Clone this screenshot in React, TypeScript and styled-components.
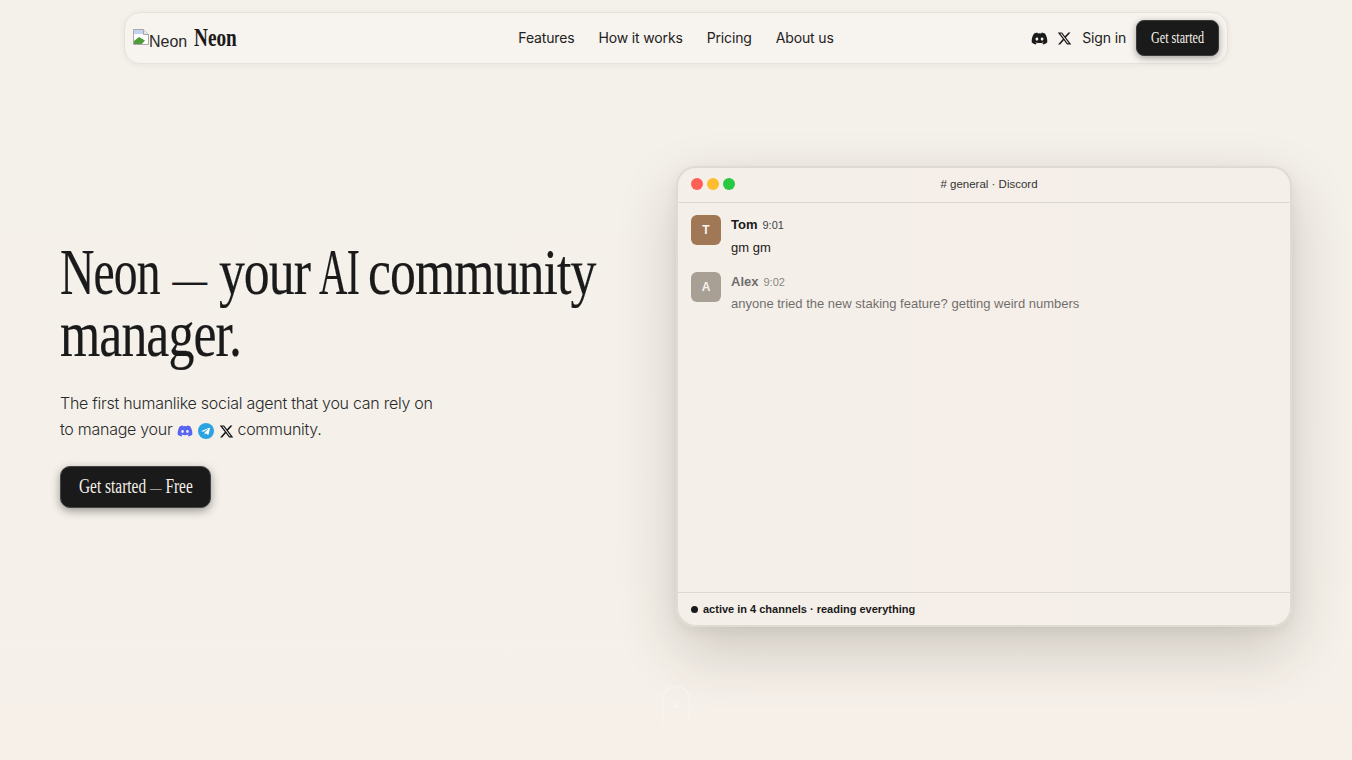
import React from "react";
import styled, { createGlobalStyle } from "styled-components";
import { FaDiscord, FaXTwitter } from "react-icons/fa6";

const Global = createGlobalStyle`
  html, body { margin: 0; padding: 0; }
  body {
    background: #f5f1ea;
    color: #1a1a1a;
    font-family: "Inter", "Liberation Sans", sans-serif;
    overflow: hidden;
  }
`;

const Page = styled.div`
  position: relative;
  height: 760px;
  background: linear-gradient(180deg, #f4f0ea 0%, #f5f1ea 70%, #f6f0e9 100%);
  display: flex;
  flex-direction: column;
`;

const NavWrap = styled.header`
  padding-top: 12px;
  display: flex;
  justify-content: center;
`;

const Nav = styled.nav`
  box-sizing: border-box;
  width: 1104px;
  height: 52px;
  padding: 0 8px;
  display: grid;
  grid-template-columns: 1fr auto 1fr;
  align-items: center;
  background: #f7f3ee;
  border: 1px solid #e6e1da;
  border-radius: 16px;
  box-shadow: 0 1px 6px rgba(60, 50, 40, 0.06);
`;

const Logo = styled.a`
  display: flex;
  align-items: center;
  gap: 7px;
`;

const BrokenImage = styled.span`
  display: inline-flex;
  align-items: flex-start;
  font-family: "Liberation Sans", sans-serif;
  font-size: 16px;
  line-height: 18px;
  color: #2a2a2a;
  & > svg { display: block; flex: none; margin-top: 3px; }
  & > span { padding-top: 7px; }
`;

const Squeezed = styled.span<{ $sx: number }>`
  display: inline-block;
  font-family: "Liberation Serif", serif;
  white-space: nowrap;
  transform: scaleX(${(p) => p.$sx});
  transform-origin: left center;
`;

const Dash = styled.span<{ $size: number; $gap?: number }>`
  font-size: ${(p) => p.$size}px;
  line-height: 0;
  margin: 0 ${(p) => p.$gap ?? 0}px;
`;

const FittedWord = styled.span<{ $w: number; $sx: number }>`
  display: inline-block;
  width: ${(p) => p.$w}px;
  transform: scaleX(${(p) => p.$sx});
  transform-origin: left center;
`;

const LogoMark = styled.span`
  display: block;
  width: 44px;
  margin-top: -2px;
  font-size: 26px;
  font-weight: 700;
  line-height: 24px;
  color: #1a1a1a;
`;

const Links = styled.div`
  display: flex;
  gap: 24px;
`;

const LinkItem = styled.a`
  font-size: 14px;
  line-height: 20px;
  letter-spacing: -0.15px;
  color: #222;
`;

const NavRight = styled.div`
  display: flex;
  justify-content: flex-end;
  align-items: center;
`;

const NavIcon = styled.span<{ $gap: number }>`
  display: inline-flex;
  margin-right: ${(p) => p.$gap}px;
  color: #1a1a1a;
`;

const SmallCta = styled.button`
  box-sizing: border-box;
  width: 83px;
  height: 36px;
  margin-left: 10px;
  padding: 0;
  display: flex;
  align-items: center;
  justify-content: center;
  background: #1a1a1a;
  color: #f7f3ec;
  border: 1px solid #3a3a3a;
  border-radius: 8px;
  box-shadow: 0 2px 7px rgba(0, 0, 0, 0.35);
`;

const SmallCtaLabel = styled.span`
  display: block;
  width: 53px;
  font-size: 16px;
  line-height: 18px;
`;

const Hero = styled.main`
  flex: 1;
  display: grid;
  grid-template-columns: 616px 616px;
  justify-content: space-between;
  padding: 102px 60px 0;
  align-items: start;
`;

const Copy = styled.section`
  padding-top: 75px;
`;

const Heading = styled.h1`
  margin: 0;
  font-weight: 400;
  font-size: 66px;
  line-height: 62px;
  color: #1a1a1a;
  height: 124px;
`;

const HeadingText = styled(Squeezed)`
  letter-spacing: -1.2px;
  word-spacing: -4px;
  -webkit-text-stroke: 0.2px #1a1a1a;
`;

const Sub = styled.p`
  margin: 25px 0 0;
  font-size: 16px;
  font-weight: 300;
  line-height: 26px;
  letter-spacing: -0.27px;
  color: #2a2a2a;
`;

const InlineIcons = styled.span`
  display: inline-flex;
  align-items: center;
  gap: 5px;
  margin: 0 3px 0 5px;
  vertical-align: -4px;
`;

const BigCta = styled.button`
  box-sizing: border-box;
  display: flex;
  align-items: center;
  justify-content: center;
  width: 151px;
  height: 42px;
  margin-top: 24px;
  padding: 0 0 2px;
  background: #1a1a1a;
  color: #f5f0e9;
  border: 1px solid #444;
  border-radius: 10px;
  box-shadow: 0 3px 10px rgba(0, 0, 0, 0.38);
`;

const BigCtaLabel = styled.span`
  display: block;
  width: 113px;
  font-size: 20px;
  line-height: 24px;
`;

const Window = styled.section`
  box-sizing: border-box;
  height: 461px;
  display: flex;
  flex-direction: column;
  background: linear-gradient(90deg, #f4efe9 0%, #f6efe9 50%, #f4efe9 100%);
  border: 2px solid #dfdad3;
  border-radius: 20px;
  box-shadow: 0 24px 60px rgba(50, 40, 30, 0.2), 0 4px 14px rgba(50, 40, 30, 0.06);
  font-family: "Liberation Sans", sans-serif;
  overflow: hidden;
`;

const TitleBar = styled.div`
  box-sizing: border-box;
  height: 35px;
  flex: none;
  display: flex;
  align-items: center;
  gap: 4px;
  padding: 0 13px 2px;
  border-bottom: 1px solid #ddd8d1;
`;

const Dot = styled.span<{ $c: string }>`
  width: 12px;
  height: 12px;
  border-radius: 50%;
  background: ${(p) => p.$c};
`;

const WinTitle = styled.span`
  flex: 1;
  margin-right: 38px;
  text-align: center;
  font-size: 11.5px;
  color: #333;
`;

const Messages = styled.div`
  flex: 1;
  padding: 12px 13px;
  display: flex;
  flex-direction: column;
  gap: 14px;
`;

const Message = styled.article<{ $faded?: boolean }>`
  display: flex;
  gap: 10px;
  opacity: ${(p) => (p.$faded ? 0.62 : 1)};
`;

const Avatar = styled.span<{ $bg: string }>`
  flex: none;
  width: 30px;
  height: 30px;
  border-radius: 6px;
  display: flex;
  align-items: center;
  justify-content: center;
  background: ${(p) => p.$bg};
  color: #f8f4ee;
  font-size: 12px;
  font-weight: 700;
`;

const Meta = styled.div`
  display: flex;
  align-items: baseline;
  gap: 5px;
  height: 20px;
  line-height: 20px;
`;

const Name = styled.span`
  font-size: 13px;
  font-weight: 700;
  color: #1a1a1a;
`;

const Time = styled.span`
  font-size: 11px;
  color: #444;
`;

const Body = styled.div<{ $nudge?: number }>`
  margin-top: ${(p) => 3 - (p.$nudge ?? 0)}px;
  font-size: 13px;
  line-height: 20px;
  color: #1a1a1a;
`;

const StatusBar = styled.div`
  box-sizing: border-box;
  height: 33px;
  flex: none;
  display: flex;
  align-items: center;
  gap: 5px;
  padding: 0 13px;
  border-top: 1px solid #ddd8d1;
  font-size: 11px;
  font-weight: 700;
  color: #1a1a1a;
`;

const StatusDot = styled.span`
  width: 7px;
  height: 7px;
  border-radius: 50%;
  background: #1a1a1a;
`;

const ScrollHint = styled.div`
  position: absolute;
  left: 662px;
  top: 686px;
  width: 28px;
  height: 38px;
  box-sizing: border-box;
  border: 1px solid rgba(255, 255, 255, 0.35);
  border-bottom-color: transparent;
  border-radius: 14px 14px 0 0;
  display: flex;
  justify-content: center;
  padding-top: 18px;
`;

const ScrollPip = styled.span`
  width: 3px;
  height: 3px;
  border-radius: 50%;
  background: rgba(255, 255, 255, 0.5);
`;

const BrokenIcon = () => (
  <svg width="16" height="16" viewBox="0 0 16 16">
    <path d="M0.5 0.5H10.5L15.5 5.5V15.5H0.5Z" fill="#fff" stroke="#a9a9a9" />
    <path d="M10.5 0.5V5.5H15.5" fill="#e8e8e8" stroke="#a9a9a9" />
    <path d="M1 1H10V5H1Z" fill="#c3d4f2" />
    <path d="M1 15V12L6 8L12 11.5L9 15Z" fill="#4f9a3a" />
    <path d="M9 15L15 9V15Z" fill="#ffffff" />
  </svg>
);

const TelegramIcon = () => (
  <svg width="16" height="16" viewBox="0 0 16 16">
    <circle cx="8" cy="8" r="8" fill="#2aa3e2" />
    <path
      d="M3.4 7.9L11.3 4.8C11.7 4.7 12 4.9 11.9 5.4L10.6 11.4C10.5 11.9 10.2 12 9.8 11.7L7.9 10.3L7 11.2C6.9 11.3 6.7 11.4 6.5 11.4L6.7 9.4L10.2 6.2C10.4 6 10.2 5.9 9.9 6.1L5.6 8.8L3.7 8.2C3.2 8.1 3.2 8 3.4 7.9Z"
      fill="#fff"
    />
  </svg>
);

export default function App() {
  return (
    <Page>
      <Global />
      <NavWrap>
        <Nav>
          <Logo>
            <BrokenImage>
              <BrokenIcon />
              <span>Neon</span>
            </BrokenImage>
            <LogoMark>
              <Squeezed $sx={0.74}>Neon</Squeezed>
            </LogoMark>
          </Logo>
          <Links>
            <LinkItem>Features</LinkItem>
            <LinkItem>How it works</LinkItem>
            <LinkItem>Pricing</LinkItem>
            <LinkItem>About us</LinkItem>
          </Links>
          <NavRight>
            <NavIcon $gap={9}>
              <FaDiscord size={17} />
            </NavIcon>
            <NavIcon $gap={10}>
              <FaXTwitter size={15} />
            </NavIcon>
            <LinkItem>Sign in</LinkItem>
            <SmallCta>
              <SmallCtaLabel>
                <Squeezed $sx={0.76}>Get started</Squeezed>
              </SmallCtaLabel>
            </SmallCta>
          </NavRight>
        </Nav>
      </NavWrap>
      <Hero>
        <Copy>
          <Heading>
            <HeadingText $sx={0.785}>
              <FittedWord $w={127} $sx={0.92}>Neon</FittedWord> <Dash $size={44} $gap={5}>—</Dash> your{" "}
              <FittedWord $w={51} $sx={0.76}>AI</FittedWord> community
              <br />
              manager.
            </HeadingText>
          </Heading>
          <Sub>
            The first humanlike social agent that you can rely on
            <br />
            to manage your
            <InlineIcons>
              <FaDiscord size={16} color="#5865f2" />
              <TelegramIcon />
              <FaXTwitter size={15} color="#111" />
            </InlineIcons>
            community.
          </Sub>
          <BigCta>
            <BigCtaLabel>
              <Squeezed $sx={0.77}>
                Get started <Dash $size={15}>—</Dash> Free
              </Squeezed>
            </BigCtaLabel>
          </BigCta>
        </Copy>
        <Window>
          <TitleBar>
            <Dot $c="#ff5f57" />
            <Dot $c="#febc2e" />
            <Dot $c="#28c840" />
            <WinTitle># general · Discord</WinTitle>
          </TitleBar>
          <Messages>
            <Message>
              <Avatar $bg="#a07855">T</Avatar>
              <div>
                <Meta>
                  <Name>Tom</Name>
                  <Time>9:01</Time>
                </Meta>
                <Body>gm gm</Body>
              </div>
            </Message>
            <Message $faded>
              <Avatar $bg="#7b6f63">A</Avatar>
              <div>
                <Meta>
                  <Name>Alex</Name>
                  <Time>9:02</Time>
                </Meta>
                <Body $nudge={1}>anyone tried the new staking feature? getting weird numbers</Body>
              </div>
            </Message>
          </Messages>
          <StatusBar>
            <StatusDot />
            active in 4 channels · reading everything
          </StatusBar>
        </Window>
      </Hero>
      <ScrollHint>
        <ScrollPip />
      </ScrollHint>
    </Page>
  );
}
